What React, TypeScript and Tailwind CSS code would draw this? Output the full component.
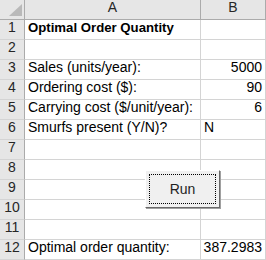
const rows: { n: number; a?: string; b?: string; bold?: boolean; bLeft?: boolean }[] = [
  { n: 1, a: 'Optimal Order Quantity', bold: true },
  { n: 2 },
  { n: 3, a: 'Sales (units/year):', b: '5000' },
  { n: 4, a: 'Ordering cost ($):', b: '90' },
  { n: 5, a: 'Carrying cost ($/unit/year):', b: '6' },
  { n: 6, a: 'Smurfs present (Y/N)?', b: 'N', bLeft: true },
  { n: 7 },
  { n: 8 },
  { n: 9 },
  { n: 10 },
  { n: 11 },
  { n: 12, a: 'Optimal order quantity:', b: '387.2983' },
];

export default function App() {
  return (
    <div className="relative w-[266px] h-[260px] overflow-hidden bg-white text-[14px] text-black" style={{ fontFamily: '"Liberation Sans", Arial, sans-serif' }}>
      <div className="grid grid-cols-[25px_176px_65px] auto-rows-[20px]">
        <div className="relative bg-[#e6e6e6] border-r border-b border-[#ababab]">
          <svg className="absolute left-[9px] top-[4px]" width="13" height="12" viewBox="0 0 13 12">
            <polygon points="13,0 13,12 0,12" fill="#b9b9b9" />
          </svg>
        </div>
        <div className="bg-[#e6e6e6] border-r border-b border-[#ababab] flex items-end justify-center pb-[1px] text-[#262626]">A</div>
        <div className="bg-[#e6e6e6] border-r border-b border-[#ababab] flex items-end justify-center pb-[1px] text-[#262626]">B</div>
        {rows.map((r) => (
          <div key={r.n} className="contents">
            <div className="bg-[#e6e6e6] border-r border-r-[#ababab] border-b border-b-[#d4d4d4] flex items-end justify-center pb-[1px] text-[#262626]">
              {r.n}
            </div>
            <div className={`border-r border-b border-[#d4d4d4] flex items-end pl-[3px] pb-[1px] whitespace-nowrap ${r.bold ? 'font-bold text-[13.2px]' : ''}`}>
              {r.a}
            </div>
            <div className={`border-r border-b border-[#d4d4d4] flex items-end pb-[1px] px-[3px] ${r.bLeft ? 'justify-start' : 'justify-end'}`}>
              {r.b}
            </div>
          </div>
        ))}
      </div>
      <button className="absolute left-[145px] top-[170px] w-[75px] h-[38px] bg-[#f0f0f0] border border-t-white border-l-white border-r-[#696969] border-b-[#696969] shadow-[1px_1px_0_#a0a0a0] p-[3px]">
        <div className="w-full h-full border border-dotted border-black flex items-center justify-center text-[#1f1f1f]">
          Run
        </div>
      </button>
    </div>
  );
}
